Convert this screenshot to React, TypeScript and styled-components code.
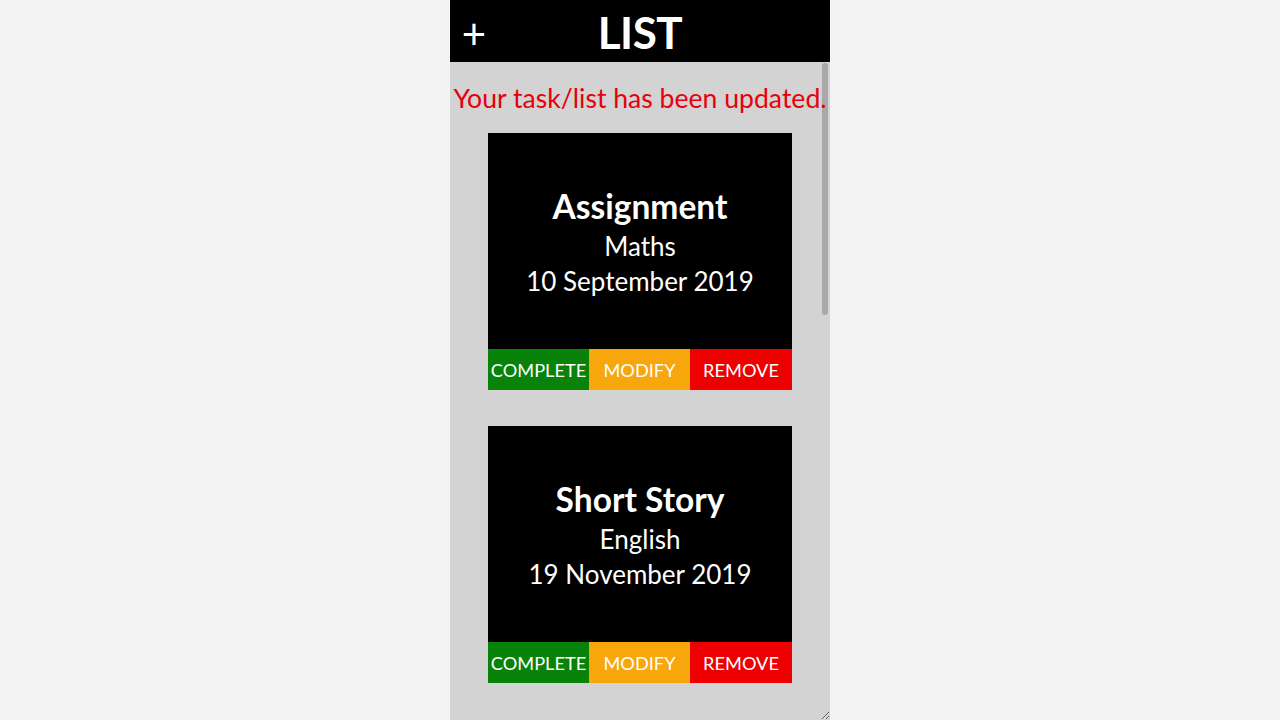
import React from "react";
import styled, { createGlobalStyle } from "styled-components";

const Global = createGlobalStyle`
  html, body { margin: 0; padding: 0; background: #f3f3f3; height: 100%; overflow: hidden; }
  * { box-sizing: border-box; }
`;

const FONT = `"Lato", "Open Sans", sans-serif`;

const Column = styled.div`
  width: 380px;
  margin: 0 auto;
  height: 720px;
  display: flex;
  flex-direction: column;
  font-family: ${FONT};
`;

const Header = styled.header`
  height: 62px;
  background: #000;
  color: #fff;
  display: grid;
  grid-template-columns: 48px 1fr 48px;
  align-items: center;
  flex-shrink: 0;
`;

const AddButton = styled.span`
  font-size: 42px;
  line-height: 1;
  text-align: center;
  margin-top: 4px;
`;

const Title = styled.h1`
  margin: 0;
  text-align: center;
  font-size: 44px;
  font-weight: 700;
  letter-spacing: -0.5px;
  margin-top: 2px;
`;

const Panel = styled.div`
  position: relative;
  flex: 1;
  min-height: 0;
  background: #d3d3d3;
`;

const ScrollThumb = styled.div`
  position: absolute;
  top: 1px;
  right: 2px;
  width: 6px;
  height: 252px;
  border-radius: 3px;
  background: #a9a9a9;
  pointer-events: none;
`;

const Scroller = styled.main`
  position: relative;
  height: 100%;
  overflow-y: auto;
  scrollbar-width: none;
  resize: vertical;
  display: flex;
  flex-direction: column;
  align-items: center;
  padding-bottom: 36px;
  &::-webkit-scrollbar { display: none; }
`;

const Message = styled.p`
  margin: 20px 0 19px;
  color: #e8000b;
  font-size: 26.6px;
  line-height: 32px;
  white-space: nowrap;
  text-align: center;
`;

const CardList = styled.div`
  display: flex;
  flex-direction: column;
  gap: 36px;
`;

const Card = styled.article`
  width: 304px;
  display: flex;
  flex-direction: column;
`;

const CardBody = styled.div`
  height: 216px;
  background: #000;
  color: #fff;
  display: flex;
  flex-direction: column;
  align-items: center;
  justify-content: center;
  padding-top: 4px;
`;

const TaskName = styled.div`
  font-size: 33.5px;
  font-weight: 700;
  line-height: 38px;
  margin-bottom: 4px;
`;

const TaskLine = styled.div`
  font-size: 26px;
  line-height: 35px;
`;

const Actions = styled.div`
  display: grid;
  grid-template-columns: 101px 101px 102px;
  height: 41px;
`;

const Action = styled.button<{ $bg: string }>`
  border: none;
  margin: 0;
  padding: 0;
  background: ${(p) => p.$bg};
  color: #fff;
  font-family: ${FONT};
  font-size: 18.2px;
  cursor: pointer;
`;

const tasks = [
  { name: "Assignment", subject: "Maths", date: "10 September 2019" },
  { name: "Short Story", subject: "English", date: "19 November 2019" },
];

export default function App() {
  return (
    <>
      <Global />
      <Column>
        <Header>
          <AddButton>+</AddButton>
          <Title>LIST</Title>
          <span />
        </Header>
        <Panel>
          <ScrollThumb />
          <Scroller>
            <Message>Your task/list has been updated.</Message>
            <CardList>
              {tasks.map((t) => (
                <Card key={t.name}>
                  <CardBody>
                    <TaskName>{t.name}</TaskName>
                    <TaskLine>{t.subject}</TaskLine>
                    <TaskLine>{t.date}</TaskLine>
                  </CardBody>
                  <Actions>
                    <Action $bg="#088208">COMPLETE</Action>
                    <Action $bg="#f7a60c">MODIFY</Action>
                    <Action $bg="#ee0000">REMOVE</Action>
                  </Actions>
                </Card>
              ))}
            </CardList>
          </Scroller>
        </Panel>
      </Column>
    </>
  );
}
